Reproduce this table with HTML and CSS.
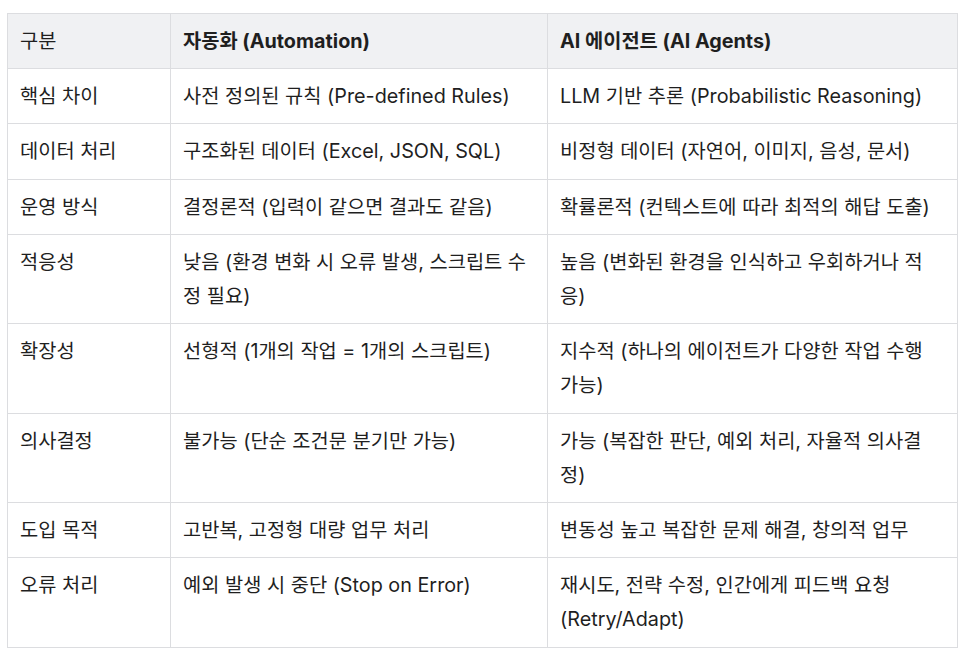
FILE: index.html
```html
<!DOCTYPE html>
<html lang="ko">
<head>
<meta charset="utf-8">
<link rel="stylesheet" href="styles.css">
</head>
<body>
<table class="cmp">
  <colgroup>
    <col class="c1"><col class="c2"><col class="c3">
  </colgroup>
  <thead>
    <tr><th class="plain">구분</th><th>자동화 (Automation)</th><th>AI 에이전트 (AI Agents)</th></tr>
  </thead>
  <tbody>
    <tr><td>핵심 차이</td><td>사전 정의된 규칙 (Pre-defined Rules)</td><td>LLM 기반 추론 (Probabilistic Reasoning)</td></tr>
    <tr><td>데이터 처리</td><td>구조화된 데이터 (Excel, JSON, SQL)</td><td>비정형 데이터 (자연어, 이미지, 음성, 문서)</td></tr>
    <tr><td>운영 방식</td><td>결정론적 (입력이 같으면 결과도 같음)</td><td>확률론적 (컨텍스트에 따라 최적의 해답 도출)</td></tr>
    <tr><td>적응성</td><td>낮음 (환경 변화 시 오류 발생, 스크립트 수정 필요)</td><td>높음 (변화된 환경을 인식하고 우회하거나 적응)</td></tr>
    <tr><td>확장성</td><td>선형적 (1개의 작업 = 1개의 스크립트)</td><td>지수적 (하나의 에이전트가 다양한 작업 수행 가능)</td></tr>
    <tr><td>의사결정</td><td>불가능 (단순 조건문 분기만 가능)</td><td>가능 (복잡한 판단, 예외 처리, 자율적 의사결정)</td></tr>
    <tr><td>도입 목적</td><td>고반복, 고정형 대량 업무 처리</td><td>변동성 높고 복잡한 문제 해결, 창의적 업무</td></tr>
    <tr><td>오류 처리</td><td>예외 발생 시 중단 (Stop on Error)</td><td>재시도, 전략 수정, 인간에게 피드백 요청 (Retry/Adapt)</td></tr>
  </tbody>
</table>
</body>
</html>
```
FILE: styles.css
```css
html, body {
  margin: 0;
  padding: 0;
  background: #ffffff;
}
body {
  padding: 13px 10px 0 7px;
  font-family: Inter, "Noto Sans CJK KR", sans-serif;
  font-size: 19.8px;
  color: #1f1f1f;
}
.cmp {
  border-collapse: collapse;
  table-layout: fixed;
  width: 950px;
}
.c1 { width: 163px; }
.c2 { width: 377px; }
.c3 { width: 410px; }
.cmp th, .cmp td {
  border: 1px solid #dcdde0;
  padding: 10px 12px;
  line-height: 34.2px;
  text-align: left;
  vertical-align: top;
  font-weight: 400;
}
.cmp thead th {
  background: #f0f1f3;
  font-weight: 700;
}
.cmp thead th.plain {
  font-weight: 400;
}
```
